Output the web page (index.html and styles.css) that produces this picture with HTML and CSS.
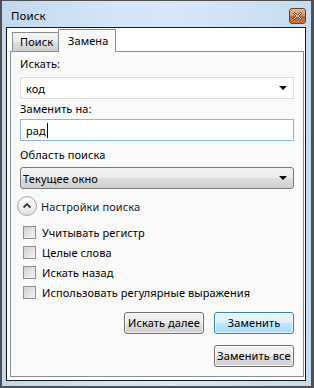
FILE: index.html
```html
<!DOCTYPE html>
<html lang="ru">
<head>
<meta charset="utf-8">
<title>Поиск</title>
<link rel="stylesheet" href="styles.css">
</head>
<body>
<div class="window">
  <div class="titlebar">
    <span class="title">Поиск</span>
    <div class="close">
      <svg width="17" height="16" viewBox="0 0 17 16">
        <path d="M5.5 4.5 L8.5 7.2 L11.5 4.5 L12.5 5.5 L9.8 8 L12.5 10.5 L11.5 11.5 L8.5 8.8 L5.5 11.5 L4.5 10.5 L7.2 8 L4.5 5.5 Z" fill="#ffffff" stroke="#4a3020" stroke-width="0.9" stroke-linejoin="round"/>
      </svg>
    </div>
  </div>
  <div class="client">
    <div class="tabs">
      <div class="tab">Поиск</div>
      <div class="tab active">Замена</div>
    </div>
    <div class="panel">
      <div class="label first">Искать:</div>
      <div class="combo editable"><span class="value">код</span><span class="arrow"></span></div>
      <div class="label">Заменить на:</div>
      <div class="textbox"><span class="value">рад</span><span class="caret"></span></div>
      <div class="label third">Область поиска</div>
      <div class="combo readonly"><span class="value">Текущее окно</span><span class="arrow"></span></div>
      <div class="expander">
        <span class="exp-btn">
          <svg width="20" height="20" viewBox="0 0 20 20">
            <path d="M6.5 11.5 L10 8 L13.5 11.5" fill="none" stroke="#3a3a3a" stroke-width="1.8"/>
          </svg>
        </span>
        <span class="exp-text">Настройки поиска</span>
      </div>
      <div class="checks">
        <div class="check"><span class="box"></span><span>Учитывать регистр</span></div>
        <div class="check"><span class="box"></span><span>Целые слова</span></div>
        <div class="check"><span class="box"></span><span>Искать назад</span></div>
        <div class="check"><span class="box"></span><span>Использовать регулярные выражения</span></div>
      </div>
      <div class="buttons">
        <div class="btn">Искать далее</div>
        <div class="btn default">Заменить</div>
      </div>
      <div class="buttons second">
        <div class="btn">Заменить все</div>
      </div>
    </div>
  </div>
</div>
</body>
</html>
```
FILE: styles.css
```css
* { box-sizing: border-box; }
html, body { margin: 0; padding: 0; }
body {
  width: 314px;
  height: 388px;
  font-family: "Noto Sans", "Open Sans", sans-serif;
  font-size: 11px;
  letter-spacing: 0.1px;
  color: #000;
  overflow: hidden;
}
.window {
  width: 314px;
  height: 388px;
  border-style: solid;
  border-color: #505050;
  border-width: 1px 3px 2px 2px;
  background: linear-gradient(90deg, #c3d8ee 0%, #d3e4f6 35%, #d8e7f7 55%, #c6dbf0 100%);
  padding: 0 5px 5px 4px;
  display: flex;
  flex-direction: column;
}
.titlebar {
  height: 26px;
  display: flex;
  align-items: flex-start;
  justify-content: space-between;
}
.title {
  padding-left: 5px;
  line-height: 16px;
  margin-top: 7px;
  font-size: 11.5px;
}
.close {
  width: 17px;
  height: 16px;
  margin-top: 7px;
  border: 1px solid #5e4630;
  border-radius: 3px;
  background: linear-gradient(#e8b48c 0%, #d99463 45%, #b9652e 55%, #c97a45 100%);
  display: flex;
}
.close svg { margin: -1px; }
.client {
  flex: 1;
  border: 1px solid #1b1b1b;
  background: #ffffff;
  display: flex;
  flex-direction: column;
  padding: 1px 1px 3px 3px;
}
.tabs {
  display: flex;
  align-items: flex-end;
  padding-left: 2px;
  height: 23px;
  position: relative;
  z-index: 1;
}
.tab {
  height: 19px;
  width: 47px;
  border: 1px solid #898c95;
  border-bottom: none;
  background: linear-gradient(#f3f3f3 0%, #ebebeb 50%, #dddddd 51%, #cfcfcf 100%);
  padding-left: 7px;
  line-height: 18px;
  margin-bottom: 1px;
  white-space: nowrap;
}
.tab.active {
  height: 23px;
  width: 58px;
  margin-left: -1px;
  margin-bottom: 0;
  background: #f9f9f9;
  padding-left: 9px;
  line-height: 22px;
}
.panel {
  flex: 1;
  margin-top: -1px;
  border: 1px solid #898c95;
  background: #f9f9f9;
  padding: 0 9px 0 9px;
  display: flex;
  flex-direction: column;
}
.label {
  height: 16px;
  line-height: 16px;
  margin-top: 2px;
}
.label.first { margin-top: 4px; }
.label.third { margin-top: 6px; }
.combo, .textbox {
  height: 22px;
  display: flex;
  align-items: center;
  justify-content: space-between;
}
.combo.editable {
  margin-top: 5px;
  background: #ffffff;
  border: 1px solid #d9dde3;
  padding: 0 5px 0 5px;
}
.textbox {
  margin-top: 2px;
  background: #ffffff;
  border: 1px solid #8ab8e6;
  justify-content: flex-start;
  padding: 0 5px;
}
.caret {
  width: 1px;
  height: 15px;
  background: #000;
  margin-left: 1px;
}
.combo.readonly {
  margin-top: 4px;
  border: 1px solid #7a7a7a;
  border-radius: 3px;
  background: linear-gradient(#f2f2f2 0%, #ebebeb 50%, #dddddd 51%, #cfcfcf 100%);
  padding: 0 5px 0 2px;
}
.arrow {
  width: 0;
  height: 0;
  border-left: 4px solid transparent;
  border-right: 4px solid transparent;
  border-top: 4px solid #000;
  margin-right: 1px;
}
.expander {
  margin-top: 7px;
  margin-left: -3px;
  height: 20px;
  display: flex;
  align-items: center;
}
.exp-btn {
  width: 20px;
  height: 20px;
  border-radius: 50%;
  border: 1px solid #a4a4a4;
  background: linear-gradient(#ffffff 0%, #f0f0f0 50%, #e2e2e2 100%);
  display: flex;
}
.exp-btn svg { margin: -1px; }
.exp-text {
  margin-left: 4px;
  color: #1a1a1a;
}
.checks {
  margin-top: 6px;
  display: flex;
  flex-direction: column;
}
.check {
  height: 20px;
  display: flex;
  align-items: center;
  white-space: nowrap;
}
.box {
  width: 13px;
  height: 13px;
  margin-left: 3px;
  margin-right: 6px;
  border: 1px solid #8e8f8f;
  background: linear-gradient(135deg, #cfcfcf, #f4f4f4);
}
.buttons {
  display: flex;
  justify-content: flex-end;
  gap: 10px;
  margin-top: 10px;
}
.buttons.second { margin-top: 11px; }
.btn {
  width: 80px;
  height: 22px;
  border: 1px solid #707070;
  border-radius: 3px;
  background: linear-gradient(#f2f2f2 0%, #ebebeb 50%, #dddddd 51%, #cfcfcf 100%);
  text-align: center;
  line-height: 20px;
  white-space: nowrap;
  box-shadow: inset 0 0 0 1px rgba(255,255,255,0.7);
}
.btn.default {
  border-color: #3c7fb1;
  background: linear-gradient(#eaf6fd 0%, #d9f0fc 50%, #bee6fd 51%, #a7d9f5 100%);
}
```
